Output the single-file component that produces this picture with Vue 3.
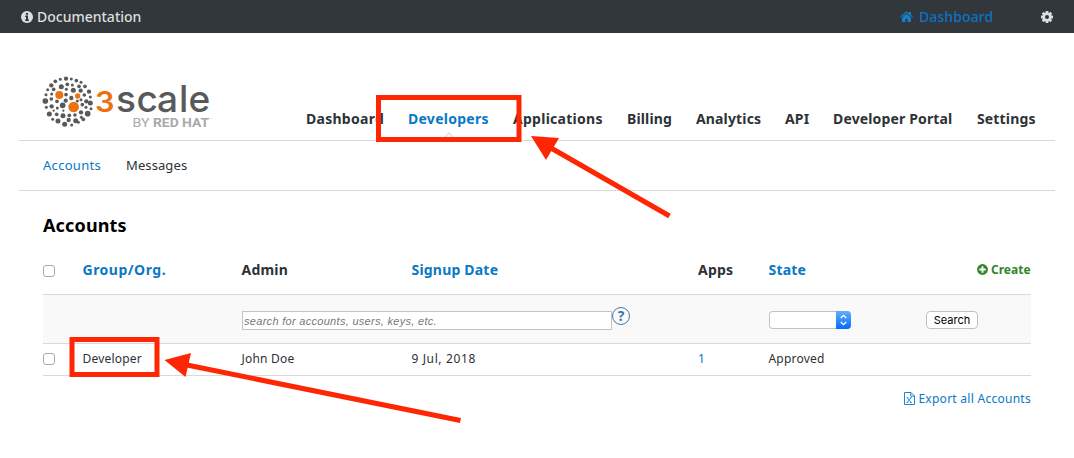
<script setup>
const navItems = [
  { label: 'Dashboard', size: 'dashboard' },
  { label: 'Developers', size: 'developers', active: true },
  { label: 'Applications', size: 'applications' },
  { label: 'Billing', size: 'billing' },
  { label: 'Analytics', size: 'analytics' },
  { label: 'API', size: 'api' },
  { label: 'Developer Portal', size: 'portal' },
  { label: 'Settings', size: 'settings' }
]

// Logo mark: [x, y, radius]
const greyDots = [
  [78, 15, 6], [61, 17, 4], [94, 16, 4], [109, 21, 5], [123, 26, 4], [46, 23, 5],
  [34, 35, 6], [23, 48, 4], [41, 47, 5], [64, 39, 7], [82, 32, 5], [97, 34, 4],
  [117, 38, 5], [135, 38, 5], [100, 50, 7], [79, 47, 4], [122, 51, 6], [147, 54, 6],
  [18, 63, 4], [35, 61, 4], [78, 63, 5], [133, 64, 5], [151, 70, 4], [94, 73, 6],
  [16, 82, 8], [34, 76, 5], [51, 83, 5], [77, 81, 6], [112, 82, 4], [123, 78, 4],
  [139, 83, 6], [151, 88, 7], [19, 101, 4], [35, 98, 6], [68, 95, 8], [52, 103, 4],
  [127, 93, 5], [138, 101, 4], [153, 105, 4], [28, 121, 7], [50, 122, 5], [41, 111, 3],
  [69, 126, 7], [70, 111, 3], [88, 125, 5], [105, 124, 5], [123, 116, 6], [143, 120, 8],
  [38, 137, 4], [54, 142, 7], [74, 152, 7], [86, 139, 6], [107, 141, 7], [124, 131, 4],
  [95, 154, 4], [115, 146, 4], [130, 137, 5]
]
const orangeDots = [[58, 64, 12], [113, 67, 8], [101, 100, 16]]
</script>

<template>
  <div class="page">
    <header class="topbar">
      <a class="docs">
        <svg class="info" viewBox="0 0 12 12">
          <circle cx="6" cy="6" r="6" fill="#dedede" />
          <path d="M4.9 2h2.2v1.7H4.9zM4.2 4.6H7v4h.9V10H4.2V8.600h.8V6h-.8z" fill="#32373b" />
        </svg>
        <span class="docs-label">Documentation</span>
      </a>
      <a class="home">
        <svg class="house" viewBox="0 0 13 11">
          <path d="M0 5.700 6.200.5q.3-.2.600 0L9 2.300V1h2v3L13 5.700l-.7.800-5.800-4.800L.700 6.500z" />
          <path d="M2 6.500 6.500 2.800 11 6.500V11H7.600V7.800H5.400V11H2z" />
        </svg>
        <span class="home-label">Dashboard</span>
      </a>
      <svg class="gear" viewBox="-6 -6 12 12">
        <g fill="#dedede">
          <rect v-for="n in 4" :key="n" x="-1.4" y="-6" width="2.8" height="12" rx=".3" :transform="`rotate(${n * 45})`" />
          <circle r="4.5" />
        </g>
        <circle r="2" fill="#32373b" />
      </svg>
    </header>

    <div class="masthead">
      <svg class="logo" viewBox="0 0 172 56">
        <g transform="translate(-3 -.3) scale(.33333)">
          <circle v-for="(d, i) in greyDots" :key="i" :cx="d[0]" :cy="d[1]" :r="d[2] + .5" fill="#58595b" />
          <circle v-for="(d, i) in orangeDots" :key="`o${i}`" :cx="d[0]" :cy="d[1]" :r="d[2]" fill="#ec7211" />
        </g>
        <text class="brand three" x="52" y="38" textLength="19.500" lengthAdjust="spacingAndGlyphs">3</text>
        <text class="brand scale" x="73 93.500 114 136 145.500" y="38">scale</text>
        <text class="by" x="89.500" y="53" textLength="17" lengthAdjust="spacingAndGlyphs">BY</text>
        <text class="by strong" x="110" y="53" textLength="56" lengthAdjust="spacingAndGlyphs">RED HAT</text>
        <circle cx="167.800" cy="44.500" r=".6" fill="#b5b5b5" />
      </svg>
      <nav class="nav">
        <a v-for="item in navItems" :key="item.label" :class="['nav-item', item.size, { active: item.active }]">{{ item.label }}</a>
      </nav>
    </div>

    <nav class="subnav">
      <a class="sub-accounts">Accounts</a>
      <a class="sub-messages">Messages</a>
    </nav>

    <main class="content">
      <h1><span>Accounts</span></h1>
      <div class="row head">
        <i class="check"></i>
        <span class="link group">Group/Org.</span>
        <span class="admin">Admin</span>
        <span class="link signup">Signup Date</span>
        <span class="apps">Apps</span>
        <span class="link state">State</span>
        <span class="create">
          <svg viewBox="0 0 11 11"><circle cx="5.500" cy="5.500" r="5.400" fill="#33842b" /><path d="M5.500 2.300v6.400M2.300 5.500h6.400" stroke="#fff" stroke-width="1.800" /></svg>
          <b>Create</b>
        </span>
      </div>
      <div class="row filter">
        <div class="search">
          <div class="input"><span>search for accounts, users, keys, etc.</span></div>
          <span class="help">?</span>
        </div>
        <div class="select">
          <svg viewBox="0 0 15 18"><path d="M4.700 7 7.500 4.300 10.300 7M4.700 11l2.800 2.700 2.800-2.700" fill="none" stroke="#fff" stroke-width="1.300" /></svg>
        </div>
        <div class="button"><span>Search</span></div>
      </div>
      <div class="row data">
        <i class="check"></i>
        <span class="d-name">Developer</span>
        <span class="d-admin">John Doe</span>
        <span class="d-date">9 Jul, 2018</span>
        <span class="d-apps">1</span>
        <span class="d-state">Approved</span>
      </div>
      <a class="export">
        <svg viewBox="0 0 11 13" fill="none" stroke="#1b87cf">
          <path d="M.5.500H7L10.500 4v8.500H.5zM6.800.5v3.700h3.700" />
          <path d="M3.200 5.700 7 10.500M7 5.700 3.200 10.500M2.600 5.700h1.700M6 5.700h1.700M2.600 10.500h1.700M6 10.500h1.700" stroke-width=".9" />
        </svg>
        <span>Export all Accounts</span>
      </a>
    </main>

    <svg class="marks" viewBox="0 0 1074 458">
      <g fill="none" stroke="#ff2603" stroke-width="5">
        <path d="M378.500 97.500h140.500v42h-140.500z" />
        <path d="M72 339.500h85v35H72z" />
        <path d="M669.500 216 551 148M460.500 420.500 187 365" />
      </g>
      <path d="M531 136 559 138 546 160zM164.500 360 191 353 185.500 377z" fill="#ff2603" />
    </svg>
  </div>
</template>

<style>
body { margin: 0; background: #fff; }
</style>

<style scoped>
.page {
  position: relative;
  width: 1074px;
  height: 458px;
  overflow: hidden;
  background: #fff;
  color: #2d3134;
  font-family: "Noto Sans", "Open Sans", sans-serif;
  font-size: 13px;
  white-space: nowrap;
}
svg { display: block; flex: none; }
a, .link { color: #0a78c4; }
.topbar {
  display: flex;
  align-items: center;
  box-sizing: border-box;
  height: 33px;
  padding: 0 21px;
  background: #32373b;
}
.docs, .home { display: flex; align-items: center; }
.docs { color: #dedede; gap: 4px; }
.info { width: 12px; height: 12px; }
.docs-label, .home-label { margin-top: -1px; font-size: 14px; font-weight: 500; }
.docs-label { width: 104px; }
.home { margin-left: auto; gap: 6px; color: #0a72c8; }
.house { width: 13px; height: 11px; fill: #1580c8; }
.home-label { width: 76px; letter-spacing: .1px; }
.gear { width: 12px; height: 12px; margin-left: 46px; }

.masthead {
  display: flex;
  box-sizing: border-box;
  height: 108px;
  margin: 0 19px;
  padding: 41px 20px 0 24px;
  border-bottom: 1px solid #d9d9d9;
}
.logo { width: 172px; height: 56px; overflow: visible; }
.brand { font-family: Inter, sans-serif; fill: #58595b; }
.three { font-size: 28px; font-weight: 600; fill: #ec7211; }
.scale { font-size: 37px; font-weight: 500; }
.by { font-family: "Roboto", sans-serif; font-size: 12.500px; fill: #a9a9a9; }
.by.strong { font-weight: 700; }
.nav { display: flex; gap: 24px; margin-left: 91px; padding-top: 35px; }
.nav-item { position: relative; font-size: 14px; font-weight: 700; letter-spacing: .15px; line-height: 20px; color: #2d3336; }
.nav-item.active { color: #0a78c4; }
.nav-item.active::after {
  content: "";
  position: absolute;
  left: 37px;
  top: 25px;
  width: 7px;
  height: 7px;
  border: solid #d9d9d9;
  border-width: 1px 0 0 1px;
  transform: rotate(45deg);
}
.nav-item.dashboard, .nav-item.developers, .nav-item.applications { letter-spacing: .27px; }
.dashboard { width: 78px; }
.developers { width: 81px; }
.applications { width: 90px; }
.billing { width: 45px; }
.analytics { width: 65px; }
.api { width: 24px; }
.portal { width: 120px; }
.settings { width: 58px; }

.subnav {
  display: flex;
  gap: 24px;
  box-sizing: border-box;
  height: 50px;
  margin: 0 19px;
  padding: 15px 24px 0;
  border-bottom: 1px solid #d9d9d9;
  line-height: 19px;
}
.sub-accounts { width: 59px; letter-spacing: .3px; }
.sub-messages { color: #2d3134; letter-spacing: .1px; }

.content { width: 988px; margin-left: 43px; }
h1 { margin: 0; padding-top: 21px; height: 51px; box-sizing: border-box; font-size: 18px; line-height: 26px; font-weight: 700; letter-spacing: .15px; color: #000; }
.row { display: grid; box-sizing: border-box; border-bottom: 1px solid #d9d9d9; }
.head, .data { grid-template-columns: 39.500px 159px 170px 286.500px 70.500px 208.500px 54px; align-items: center; }
.head { height: 53px; padding-top: 3px; font-size: 14px; font-weight: 700; letter-spacing: .2px; }
.group { letter-spacing: .5px; }
.check { box-sizing: border-box; width: 12px; height: 12px; border: 1px solid #aaa; border-radius: 3px; background: #fff; }
.head .check { margin-top: 3px; }
.create { display: flex; align-items: center; gap: 3px; color: #33842b; font-size: 12px; letter-spacing: 0; }
.create svg { width: 11px; height: 11px; }
.create b { font-weight: 700; }
.filter {
  height: 49px;
  grid-template-columns: 527px 157px 1fr;
  padding: 16px 0 0 199px;
  align-items: start;
  background: #f9f9f9;
}
.search { display: flex; }
.input {
  box-sizing: border-box;
  width: 370px;
  height: 19px;
  border: 1px solid #c4c4c4;
  background: #fff;
  padding-left: 1px;
  color: #777;
  letter-spacing: .3px;
  font: italic 11px/18px "Liberation Sans", sans-serif;
}
.help {
  box-sizing: border-box;
  width: 18px;
  height: 18px;
  margin-top: -4px;
  border: 1px solid #3d79ac;
  border-radius: 50%;
  text-align: center;
  color: #3d74a5;
  font: 700 14px/16px "Open Sans", sans-serif;
}
.select {
  display: flex;
  justify-content: flex-end;
  box-sizing: border-box;
  width: 82px;
  height: 18px;
  border: 1px solid #c2c2c2;
  border-right: 0;
  border-radius: 4px;
  background: #fff;
}
.select svg { width: 15px; height: 18px; margin-top: -1px; border-radius: 0 4px 4px 0; background: linear-gradient(#66acf9, #056cff); }
.button {
  box-sizing: border-box;
  width: 52px;
  height: 18px;
  border: 1px solid #c2c2c2;
  border-radius: 4px;
  background: #fff;
  color: #000;
  text-align: center;
  font: 11px/16px Inter, sans-serif;
}
.data { height: 32px; font-size: 12px; letter-spacing: .2px; padding-bottom: 2px; }
.data .check { margin-top: 1px; }
.d-date { letter-spacing: .62px; }
.d-apps { color: #0a78c4; }
.export { display: flex; justify-content: flex-end; align-items: center; gap: 3px; height: 18px; margin-top: 13px; font-size: 12px; letter-spacing: .27px; }
.export svg { width: 11px; height: 13px; }
.marks { position: absolute; left: 0; top: 0; width: 1074px; height: 458px; }
</style>
